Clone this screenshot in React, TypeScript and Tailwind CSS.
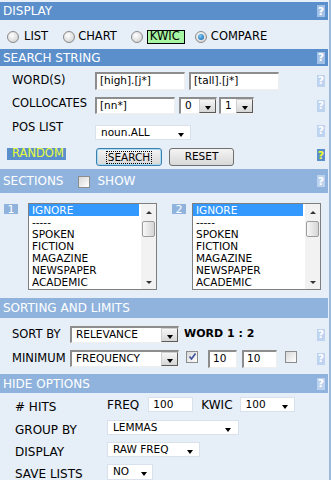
import React from "react";

type HelpKind = "dark" | "light" | "body" | "yellow";

function Help({ kind = "body" }: { kind?: HelpKind }) {
  const cls =
    kind === "dark"
      ? "bg-[#a3c0e7] text-white"
      : kind === "light"
      ? "bg-[#bcd2ef] text-white"
      : kind === "yellow"
      ? "bg-[#5b8fcb] text-[#f0ff2a]"
      : "bg-[#bed3ef] text-white";
  return (
    <span className={`flex h-[12px] w-[8px] shrink-0 items-center justify-center text-[11px] font-bold leading-none ${cls}`}>
      ?
    </span>
  );
}

function Header({ title, dark, help = true, h, children }: { title: string; dark?: boolean; help?: boolean; h: string; children?: React.ReactNode }) {
  return (
    <div className={`flex ${h} items-center justify-between pl-[3px] pr-[3px] text-[12px] text-white ${dark ? "bg-[#5b8fcb]" : "bg-[#8fb3dd]"}`}>
      <div className="flex items-center">
        <span>{title}</span>
        {children}
      </div>
      {help && <Help kind={dark ? "dark" : "light"} />}
    </div>
  );
}

function Arrow() {
  return <span className="block h-0 w-0 border-x-[3px] border-t-[4px] border-x-transparent border-t-black" />;
}

function Radio({ checked }: { checked?: boolean }) {
  return (
    <span className="flex h-[12px] w-[12px] shrink-0 items-center justify-center rounded-full border border-[#8a8a8a] bg-[radial-gradient(circle_at_40%_35%,#ffffff,#c9c9c9)]">
      {checked && <span className="h-[6px] w-[6px] rounded-full bg-[radial-gradient(circle_at_40%_35%,#7cc8f5,#0b5fa8)]" />}
    </span>
  );
}

function Check({ checked }: { checked?: boolean }) {
  return (
    <span className="flex h-[12px] w-[12px] shrink-0 items-center justify-center border border-[#8c8c8c] bg-gradient-to-br from-[#d8d8d8] to-[#ffffff]">
      {checked && (
        <svg width="9" height="9" viewBox="0 0 9 9">
          <path d="M1.5 4.5 L3.5 7 L7.5 1.5" fill="none" stroke="#3b4f9a" strokeWidth="1.6" />
        </svg>
      )}
    </span>
  );
}

function Field({ w, h = "h-[18px]", value }: { w: string; h?: string; value: string }) {
  return (
    <div className={`${w} ${h} flex shrink-0 items-center border-b border-l-2 border-r border-t-2 border-b-[#efefef] border-l-[#8d8d8d] border-r-[#efefef] border-t-[#8d8d8d] bg-white pl-[3px] text-[10.5px] text-black`}>
      {value}
    </div>
  );
}

function DropSelect({ w, value }: { w: string; value: string }) {
  return (
    <div className={`${w} flex h-[17px] shrink-0 items-stretch border-b border-l-2 border-r border-t-2 border-b-[#efefef] border-l-[#8d8d8d] border-r-[#efefef] border-t-[#8d8d8d] bg-white`}>
      <div className="flex flex-1 items-center pl-[4px] text-[10.5px]">{value}</div>
      <div className="flex w-[17px] items-end justify-center border border-b-[#5a5a5a] border-l-[#cfcfcf] border-r-[#5a5a5a] border-t-[#cfcfcf] bg-gradient-to-b from-[#f6f6f6] to-[#d6d6d6] pb-[2px]">
        <Arrow />
      </div>
    </div>
  );
}

function FlatSelect({ w, h = "h-[15px]", value, pr = "pr-[6px]" }: { w: string; h?: string; value: string; pr?: string }) {
  return (
    <div className={`${w} ${h} flex shrink-0 items-center justify-between border border-[#d9e1ec] bg-white pl-[5px] ${pr} text-[10.5px]`}>
      <span>{value}</span>
      <span className="mt-[4px]">
        <Arrow />
      </span>
    </div>
  );
}

function Scrollbar() {
  return (
    <div className="flex w-[15px] flex-col bg-[#f2f2f2]">
      <div className="flex h-[17px] items-center justify-center">
        <span className="block h-0 w-0 border-x-[3px] border-b-[3px] border-x-transparent border-b-[#333]" />
      </div>
      <div className="mx-[1px] h-[16px] rounded-[2px] border border-[#9c9c9c] bg-gradient-to-r from-[#f8f8f8] to-[#d5d5d5]" />
      <div className="flex-1" />
      <div className="flex h-[14px] items-center justify-center">
        <span className="block h-0 w-0 border-x-[3px] border-t-[3px] border-x-transparent border-t-[#333]" />
      </div>
    </div>
  );
}

const sections = ["IGNORE", "-----", "SPOKEN", "FICTION", "MAGAZINE", "NEWSPAPER", "ACADEMIC"];

function ListBox() {
  return (
    <div className="flex h-[87px] w-[129px] shrink-0 border border-[#7f7f7f] bg-white">
      <div className="w-[110px]">
        {sections.map((s, i) => (
          <div key={s} className={`h-[12px] pl-[3px] text-[10.5px] leading-[12px] ${i === 0 ? "bg-[#3399ff] text-white" : "text-black"}`}>
            {s}
          </div>
        ))}
      </div>
      <div className="w-[2px]" />
      <Scrollbar />
    </div>
  );
}

function Badge({ n }: { n: string }) {
  return (
    <span className="mt-[1px] flex h-[10px] w-[14px] shrink-0 items-center justify-center bg-[#8fb3dd] text-[11px] leading-none text-white">
      {n}
    </span>
  );
}

export default function App() {
  return (
    <div className="flex h-[480px] overflow-hidden bg-[#e6eef8] font-['DejaVu_Sans',Verdana,sans-serif] text-black">
      <div className="w-[328px] shrink-0 pt-[2px]">
        <Header title="DISPLAY" dark h="h-[18px]" />
        <div className="flex h-[29px] items-center pl-[7px] pt-[5px] text-[11.5px]">
          <Radio />
          <span className="ml-[5px]">LIST</span>
          <span className="ml-[15px]"><Radio /></span>
          <span className="ml-[3px]">CHART</span>
          <span className="ml-[14px]"><Radio /></span>
          <span className="ml-[4px] flex h-[14px] w-[38px] items-center border border-black bg-[#a6f5a2] pl-[2px]">KWIC</span>
          <span className="ml-[10px]"><Radio checked /></span>
          <span className="ml-[4px]">COMPARE</span>
        </div>

        <Header title="SEARCH STRING" dark h="h-[17px]" />
        <div className="pb-[3px] pl-[12px] pr-[3px] pt-[5px] text-[11.5px]">
          <div className="flex h-[19px] items-center">
            <span className="w-[83px]">WORD(S)</span>
            <Field w="w-[90px]" value="[high].[j*]" />
            <span className="ml-[4px]"><Field w="w-[90px]" value="[tall].[j*]" /></span>
            <span className="ml-auto"><Help /></span>
          </div>
          <div className="mt-[7px] flex h-[17px] items-start">
            <span className="w-[83px] leading-[12px]">COLLOCATES</span>
            <Field w="w-[80px]" h="h-[17px]" value="[nn*]" />
            <span className="ml-[4px]"><DropSelect w="w-[38px]" value="0" /></span>
            <span className="ml-[2px]"><DropSelect w="w-[35px]" value="1" /></span>
            <span className="ml-auto self-center"><Help /></span>
          </div>
          <div className="mt-[7px] flex h-[19px] items-start">
            <span className="w-[83px] leading-[12px]">POS LIST</span>
            <span className="mt-[4px]"><FlatSelect w="w-[96px]" value="noun.ALL" /></span>
            <span className="ml-auto self-center"><Help /></span>
          </div>
          <div className="mt-[8px] flex h-[18px] items-start">
            <span className="-ml-[5px] flex h-[12px] w-[59px] items-center bg-[#5b8fcb] pl-[5px] text-[11.5px] leading-none text-[#e8ff3a]">RANDOM</span>
            <button className="ml-[30px] flex h-[18px] w-[66px] items-center justify-center rounded-[3px] border border-[#3c7fb1] bg-gradient-to-b from-[#f4f4f4] to-[#d8d8d8] text-[10.5px] shadow-[inset_0_0_0_1px_#a9dcf2]">
              <span className="border border-dotted border-black px-[1px] leading-[11px]">SEARCH</span>
            </button>
            <button className="ml-[7px] flex h-[18px] w-[65px] items-center justify-center rounded-[3px] border border-[#707070] bg-gradient-to-b from-[#f4f4f4] to-[#d8d8d8] text-[10.5px]">
              RESET
            </button>
            <span className="ml-auto mt-[1px]"><Help kind="yellow" /></span>
          </div>
        </div>

        <Header title="SECTIONS" h="h-[24px]">
          <span className="ml-[14px] mt-[1px]"><Check /></span>
          <span className="ml-[8px]">SHOW</span>
        </Header>
        <div className="flex h-[105px] items-start pt-[10px]">
          <span className="ml-[4px]"><Badge n="1" /></span>
          <span className="ml-[10px]"><ListBox /></span>
          <span className="ml-[15px]"><Badge n="2" /></span>
          <span className="ml-[6px]"><ListBox /></span>
        </div>

        <Header title="SORTING AND LIMITS" help={false} h="h-[20px]" />
        <div className="h-[56px] pl-[12px] pr-[3px] pt-[8px] text-[11.5px]">
          <div className="flex h-[17px] items-center">
            <span className="w-[58px]">SORT BY</span>
            <DropSelect w="w-[109px]" value="RELEVANCE" />
            <span className="ml-[5px] text-[11px] font-bold">WORD 1 : 2</span>
            <span className="ml-auto"><Help /></span>
          </div>
          <div className="mt-[7px] flex h-[17px] items-center">
            <span className="w-[58px]">MINIMUM</span>
            <DropSelect w="w-[109px]" value="FREQUENCY" />
            <span className="-mt-[4px] ml-[7px]"><Check checked /></span>
            <span className="ml-[10px]"><Field w="w-[29px]" value="10" /></span>
            <span className="ml-[5px]"><Field w="w-[35px]" value="10" /></span>
            <span className="-mt-[4px] ml-[8px]"><Check /></span>
            <span className="ml-auto"><Help /></span>
          </div>
        </div>

        <Header title="HIDE OPTIONS" h="h-[19px]" />
        <div className="pl-[15px] pt-[4px] text-[12px]">
          <div className="flex h-[15px] items-center">
            <span className="w-[92px] pt-[4px]"># HITS</span>
            <span>FREQ</span>
            <span className="ml-[9px] flex h-[15px] w-[45px] items-center border border-[#d9e1ec] bg-white pl-[4px] text-[10.5px]">100</span>
            <span className="ml-[8px]">KWIC</span>
            <span className="ml-[7px]"><FlatSelect w="w-[55px]" value="100" /></span>
          </div>
          <div className="mt-[8px] flex h-[15px] items-center">
            <span className="w-[92px] pt-[4px]">GROUP BY</span>
            <FlatSelect w="w-[132px]" value="LEMMAS" pr="pr-[7px]" />
          </div>
          <div className="mt-[7px] flex h-[15px] items-center">
            <span className="w-[92px] pt-[4px]">DISPLAY</span>
            <FlatSelect w="w-[93px]" value="RAW FREQ" />
          </div>
          <div className="mt-[7px] flex h-[16px] items-center">
            <span className="w-[92px] pt-[4px]">SAVE LISTS</span>
            <FlatSelect w="w-[46px]" h="h-[16px]" value="NO" pr="pr-[5px]" />
          </div>
        </div>
      </div>
      <div className="ml-[1px] w-[2px] bg-[#9cb9de]" />
    </div>
  );
}
